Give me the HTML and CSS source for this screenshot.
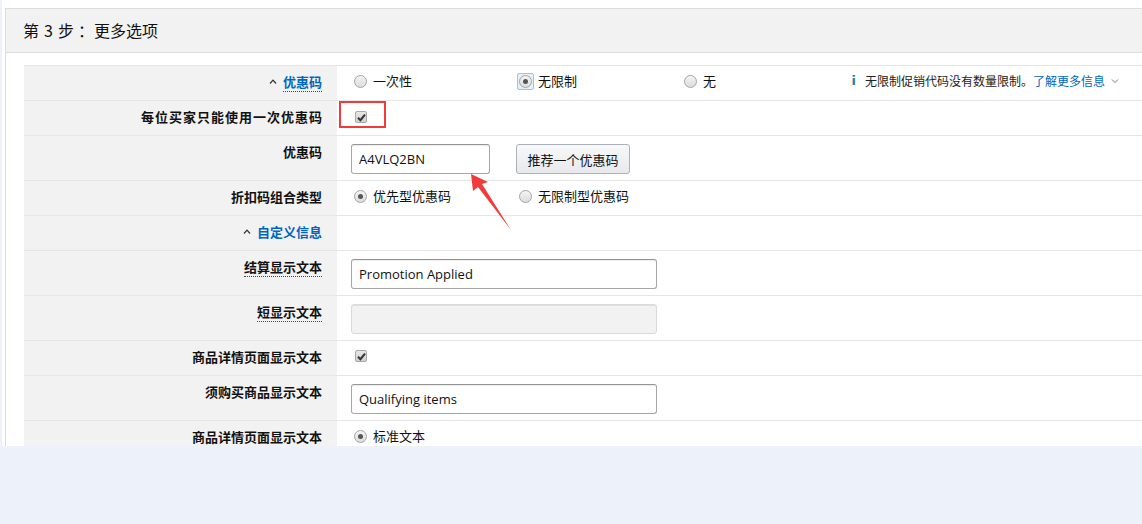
FILE: index.html
```html
<!DOCTYPE html>
<html lang="zh-CN">
<head>
    <meta charset="UTF-8">
    <title>第 3 步：更多选项</title>
    <link rel="stylesheet" href="styles.css">
</head>
<body>
    <div class="page">
        <div class="panel">
            <div class="panel-head">第<span class="num">3</span>步<span class="colon">：</span>更多选项</div>
            <div class="panel-body">
                <table class="form">
                    <tr class="h35">
                        <th><svg class="caret" width="8" height="5" viewBox="0 0 8 5"><path d="M1 4.5 L4 1.2 L7 4.5" fill="none" stroke="#333" stroke-width="1.2"/></svg><span class="link dotted">优惠码</span></th>
                        <td>
                            <div class="line">
                                <label class="opt"><span class="radio"></span>一次性</label>
                                <label class="opt"><span class="focus"><span class="radio on"></span></span>无限制</label>
                                <label class="opt"><span class="radio"></span>无</label>
                                <div class="info">
                                    <b class="i">i</b>无限制促销代码没有数量限制。<span class="link">了解更多信息</span>
                                    <svg class="chev" width="8" height="6" viewBox="0 0 8 6"><path d="M1 1.5 L4 4.5 L7 1.5" fill="none" stroke="#777" stroke-width="1"/></svg>
                                </div>
                            </div>
                        </td>
                    </tr>
                    <tr class="h35">
                        <th class="wide">每位买家只能使用一次优惠码</th>
                        <td>
                            <div class="mark"><span class="check"><svg width="9" height="9" viewBox="0 0 9 9"><path d="M1 4.8 L3.4 7.2 L8 1.6" fill="none" stroke="#333" stroke-width="2"/></svg></span></div>
                        </td>
                    </tr>
                    <tr class="h45">
                        <th>优惠码</th>
                        <td>
                            <div class="line">
                                <input class="text short" type="text" value="A4VLQ2BN">
                                <button class="btn">推荐一个优惠码</button>
                            </div>
                        </td>
                    </tr>
                    <tr class="h35">
                        <th>折扣码组合类型</th>
                        <td>
                            <div class="line">
                                <label class="opt"><span class="radio on"></span>优先型优惠码</label>
                                <label class="opt"><span class="radio"></span>无限制型优惠码</label>
                            </div>
                        </td>
                    </tr>
                    <tr class="h35">
                        <th><svg class="caret" width="8" height="5" viewBox="0 0 8 5"><path d="M1 4.5 L4 1.2 L7 4.5" fill="none" stroke="#333" stroke-width="1.2"/></svg><span class="link">自定义信息</span></th>
                        <td></td>
                    </tr>
                    <tr class="h45">
                        <th><span class="dotted">结算显示文本</span></th>
                        <td><input class="text" type="text" value="Promotion Applied"></td>
                    </tr>
                    <tr class="h45">
                        <th><span class="dotted">短显示文本</span></th>
                        <td><input class="text" type="text" value="" disabled></td>
                    </tr>
                    <tr class="h35">
                        <th>商品详情页面显示文本</th>
                        <td>
                            <div class="line"><span class="check"><svg width="9" height="9" viewBox="0 0 9 9"><path d="M1 4.8 L3.4 7.2 L8 1.6" fill="none" stroke="#333" stroke-width="2"/></svg></span></div>
                        </td>
                    </tr>
                    <tr class="h45">
                        <th>须购买商品显示文本</th>
                        <td><input class="text" type="text" value="Qualifying items"></td>
                    </tr>
                    <tr class="h35">
                        <th>商品详情页面显示文本</th>
                        <td>
                            <div class="line">
                                <label class="opt"><span class="radio on"></span>标准文本</label>
                            </div>
                        </td>
                    </tr>
                </table>
            </div>
        </div>
        <!-- 截图标注箭头 -->
        <svg class="arrow" width="60" height="70" viewBox="460 170 60 70">
            <polygon points="469,174 486,182 480,184 509,230 476,187 471,191" fill="#f23a3a"/>
        </svg>
    </div>
</body>
</html>
```

FILE: styles.css
```css
*{ box-sizing: border-box;}
body{
    margin:0;
    background:#edf1f9;
    font-family:"Noto Sans CJK SC", "Liberation Sans", sans-serif;
    font-size:13px;
    color:#111;
    overflow:hidden;
}
.page{
    position:relative;
    margin-left:2px;
    height:446px;
    background:#fff;
    padding:8px 0 0 3px;
    overflow:hidden;
}
.panel{
    border-left:1px solid #ddd;
    border-top:1px solid #ddd;
}
.panel-head{
    height:44px;
    background:#f2f2f2;
    border-bottom:1px solid #ddd;
    padding-left:17px;
    font-size:16px;
    line-height:43px;
}
.panel-head .num{
    margin:0 5px;
}
.panel-head .colon{
    margin-left:4px;
}
.panel-body{
    padding:12px 0 0 18px;
}
.form{
    width:100%;
    table-layout:fixed;
    border-collapse:collapse;
}
.form tr{
    border-top:1px solid #e6e6e6;
}
.form .h35{ height:35px;}
.form .h45{ height:45px;}
.form th{
    width:313px;
    background:#f2f2f2;
    text-align:right;
    vertical-align:top;
    padding:7px 15px 0 0;
    font-weight:bold;
    line-height:18px;
    white-space:nowrap;
}
.form th.wide{
    letter-spacing:1px;
    padding-right:14px;
}
.form td{
    vertical-align:top;
    padding:6px 15px 0 14px;
    line-height:18px;
}
.form tr.h45 td{
    padding-top:8px;
}
.line{
    display:flex;
    align-items:center;
    height:18px;
}
.form tr.h45 .line{ height:30px;}
.link{
    color:#0066c0;
}
.dotted{
    border-bottom:1px dotted #444;
}
.caret{
    margin-right:6px;
    vertical-align:3px;
}
.opt{
    display:flex;
    align-items:center;
    width:165px;
    flex-shrink:0;
    padding-left:3px;
}
.radio{
    display:inline-block;
    width:13px;
    height:13px;
    border-radius:50%;
    border:1px solid #a6a6a6;
    background:linear-gradient(#f4f4f4, #dcdcdc);
    margin-right:6px;
    position:relative;
}
.radio.on::after{
    content:"";
    position:absolute;
    left:3px;
    top:3px;
    width:5px;
    height:5px;
    border-radius:50%;
    background:#555;
}
.focus{
    display:inline-flex;
    border:1px solid #9cc4ef;
    border-radius:2px;
    padding:1px;
    margin-left:-2px;
    margin-right:4px;
    background:#e3effb;
}
.focus .radio{ margin-right:0;}
.info{
    margin-left:auto;
    padding-right:8px;
    display:flex;
    align-items:center;
    flex-shrink:0;
    white-space:nowrap;
    font-size:12px;
    color:#222;
}
.info .i{
    color:#2f7bac;
    font-family:"DejaVu Sans", sans-serif;
    font-size:13px;
    margin-right:9px;
}
.chev{
    margin-left:6px;
}
.mark{
    display:flex;
    width:47px;
    height:27px;
    margin:-6px 0 0 -12px;
    padding:8px 0 0 14px;
    border:2px solid #f23a3a;
}
.check{
    display:inline-flex;
    align-items:center;
    justify-content:center;
    width:12px;
    height:12px;
    border:1px solid #a9a9a9;
    border-radius:2px;
    background:linear-gradient(#e6e6e6, #cfcfcf);
    margin-left:4px;
}
.mark .check{ margin-left:0;}
.text{
    width:306px;
    height:30px;
    border:1px solid #a6a6a6;
    border-top-color:#949494;
    border-radius:3px;
    padding:0 7px;
    font-family:"Open Sans", "Noto Sans CJK SC", sans-serif;
    font-size:13px;
    color:#111;
    box-shadow:0 1px 0 rgba(255,255,255,.5), 0 1px 0 rgba(0,0,0,.07) inset;
}
.text.short{ width:139px;}
.text:disabled{
    background:#f2f2f2;
    border-color:#dadada;
}
.btn{
    margin-left:26px;
    height:30px;
    width:114px;
    border:1px solid #adb1b8;
    border-radius:3px;
    background:linear-gradient(#f7f8fa, #e7e9ec);
    font-family:"Noto Sans CJK SC", sans-serif;
    font-size:13px;
    color:#111;
}
.arrow{
    position:absolute;
    left:460px;
    top:170px;
}
```
